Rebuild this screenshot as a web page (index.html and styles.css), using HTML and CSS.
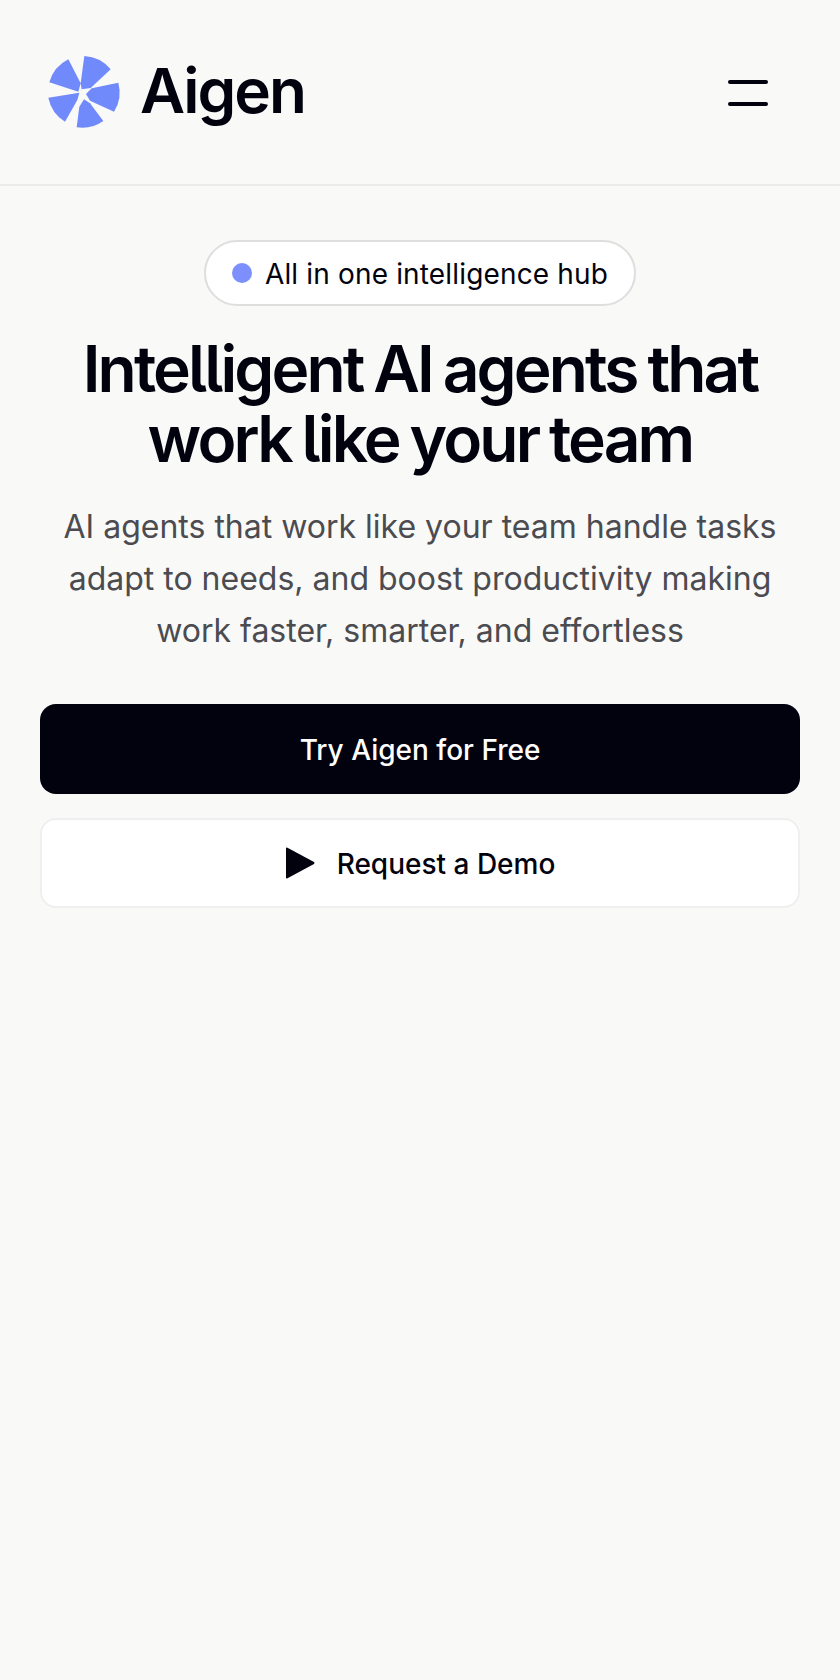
FILE: index.html
```html
<!DOCTYPE html>
<html lang="en">
<head>
  <meta charset="UTF-8">
  <meta name="viewport" content="width=device-width, initial-scale=1.0">
  <title>Aigen</title>
  <link rel="stylesheet" href="styles.css">
</head>
<body>
  <header class="site-header">
    <a class="brand" href="#">
      <svg class="brand-mark" viewBox="0 0 255 255" aria-hidden="true">
        <path d="M133 18 A110 110 0 0 1 212 58 L152 114 L125 118 L122 100 Z"/>
        <path d="M235 98 A110 110 0 0 1 222 185 L150 152 L138 132 L155 115 Z"/>
        <path d="M190 213 A110 110 0 0 1 110 232 L118 170 L132 148 L150 160 Z"/>
        <path d="M25 143 L118 128 L112 150 L75 215 A110 110 0 0 1 25 143 Z"/>
        <path d="M85 28 L122 100 L115 125 L28 97 A110 110 0 0 1 85 28 Z"/>
      </svg>
      <span class="brand-name">Aigen</span>
    </a>
    <button class="menu-toggle" aria-label="Open menu">
      <span></span>
      <span></span>
    </button>
  </header>

  <main class="hero">
    <div class="badge"><span class="badge-dot"></span>All in one intelligence hub</div>
    <h1>Intelligent AI agents that<br>work like your team</h1>
    <p class="lead">AI agents that work like your team handle tasks<br>adapt to needs, and boost productivity making<br>work faster, smarter, and effortless</p>
    <div class="actions">
      <a class="btn btn-primary" href="#">Try Aigen for Free</a>
      <a class="btn btn-secondary" href="#">
        <svg class="play-icon" viewBox="0 0 30 32" aria-hidden="true"><path d="M1 1.5 Q1 0 2.5 0.8 L29 15 Q30 16 29 17 L2.5 31.2 Q1 32 1 30.5 Z"/></svg>
        Request a Demo
      </a>
    </div>
  </main>
</body>
</html>
```

FILE: styles.css
```css
* {
  box-sizing: border-box;
}
body {
  margin: 0;
  min-height: 1680px;
  font-family: Inter, "Liberation Sans", sans-serif;
  background-color: #f9f9f8;
  color: #02020e;
}
a {
  color: inherit;
  text-decoration: none;
}
.site-header {
  display: flex;
  align-items: center;
  justify-content: space-between;
  height: 186px;
  padding: 0 72px 0 40px;
  border-bottom: 2px solid #ebebeb;
}
.brand {
  display: flex;
  align-items: center;
  gap: 15px;
}
.brand-mark {
  width: 85px;
  height: 85px;
  fill: #7089fb;
}
.brand-name {
  margin-top: -2px;
  font-size: 62px;
  font-weight: 600;
  letter-spacing: -2px;
  line-height: 1;
}
.menu-toggle {
  display: flex;
  flex-direction: column;
  gap: 18px;
  width: 40px;
  padding: 2px 0 0;
  border: 0;
  background: none;
}
.menu-toggle span {
  height: 4px;
  border-radius: 2px;
  background-color: #02020e;
}
.hero {
  display: flex;
  flex-direction: column;
  align-items: center;
  padding: 54px 40px 0;
  text-align: center;
}
.badge {
  display: flex;
  align-items: center;
  gap: 13px;
  height: 66px;
  padding: 2px 26px 0;
  border: 2px solid #dedede;
  border-radius: 33px;
  background-color: #fff;
  font-size: 28px;
  letter-spacing: 0.16px;
}
.badge-dot {
  width: 20px;
  height: 20px;
  margin-top: -2px;
  border-radius: 50%;
  background-color: #7c8ffc;
}
h1 {
  margin: 28px 0 0;
  font-size: 64px;
  font-weight: 600;
  font-feature-settings: "cv05";
  line-height: 70px;
  letter-spacing: -2.85px;
  word-spacing: -2.5px;
}
.lead {
  margin: 27px 0 0;
  font-size: 32px;
  line-height: 52px;
  color: #4b4b50;
}
.actions {
  display: flex;
  flex-direction: column;
  gap: 24px;
  width: 100%;
  margin-top: 47px;
}
.btn {
  display: flex;
  align-items: center;
  justify-content: center;
  padding-top: 2px;
  border-radius: 16px;
  font-size: 28px;
  font-weight: 500;
}
.btn-primary {
  height: 90px;
  background-color: #02020e;
  color: #fff;
}
.btn-secondary {
  gap: 22px;
  height: 90px;
  border: 2px solid #efefef;
  background-color: #fff;
}
.play-icon {
  width: 30px;
  height: 32px;
  margin-top: -2px;
  fill: #02020e;
}
```
